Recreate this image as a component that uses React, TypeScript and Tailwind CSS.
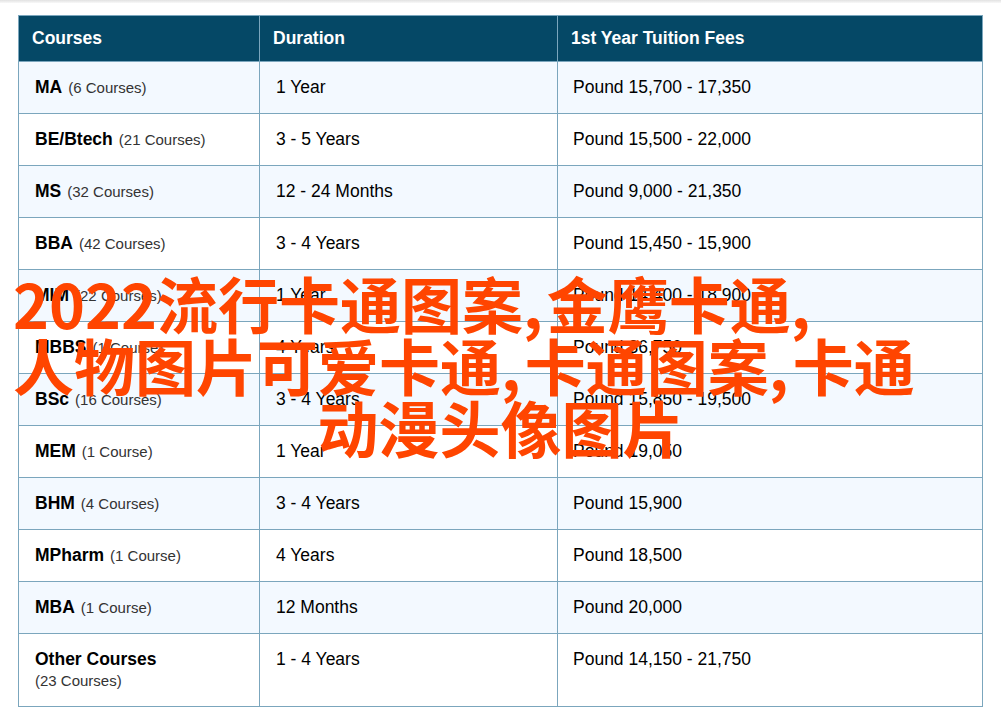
import React from 'react';

type Row = { name: string; count: string; duration: string; fees: string };

const rows: Row[] = [
  { name: 'MA', count: '(6 Courses)', duration: '1 Year', fees: 'Pound 15,700 - 17,350' },
  { name: 'BE/Btech', count: '(21 Courses)', duration: '3 - 5 Years', fees: 'Pound 15,500 - 22,000' },
  { name: 'MS', count: '(32 Courses)', duration: '12 - 24 Months', fees: 'Pound 9,000 - 21,350' },
  { name: 'BBA', count: '(42 Courses)', duration: '3 - 4 Years', fees: 'Pound 15,450 - 15,900' },
  { name: 'MIM', count: '(22 Courses)', duration: '1 Year', fees: 'Pound 14,400 - 18,900' },
  { name: 'MBBS', count: '(1 Course)', duration: '4 Years', fees: 'Pound 36,750' },
  { name: 'BSc', count: '(16 Courses)', duration: '3 - 4 Years', fees: 'Pound 15,850 - 19,500' },
  { name: 'MEM', count: '(1 Course)', duration: '1 Year', fees: 'Pound 19,050' },
  { name: 'BHM', count: '(4 Courses)', duration: '3 - 4 Years', fees: 'Pound 15,900' },
  { name: 'MPharm', count: '(1 Course)', duration: '4 Years', fees: 'Pound 18,500' },
  { name: 'MBA', count: '(1 Course)', duration: '12 Months', fees: 'Pound 20,000' },
];

const border = 'border border-[#7ba6bd]';

const App = () => {
  return (
    <div className="relative h-[720px] overflow-hidden bg-white font-['Liberation_Sans',Arial,sans-serif] text-black">
      <div className="h-[3px] bg-gradient-to-b from-[#e2e2e2] to-[#f8f8f8]" />
      <div className="pl-[18px] pt-[12px]">
        <table className="w-[965px] table-fixed border-collapse text-[17.5px]">
          <colgroup>
            <col className="w-[241px]" />
            <col className="w-[298px]" />
            <col />
          </colgroup>
          <thead>
            <tr className="h-[46px] bg-[#054866] text-left text-white">
              <th className={`${border} pl-[13px] font-bold`}>Courses</th>
              <th className={`${border} pl-[13px] font-bold`}>Duration</th>
              <th className={`${border} pl-[13px] font-bold`}>1st Year Tuition Fees</th>
            </tr>
          </thead>
          <tbody>
            {rows.map((row, i) => (
              <tr key={row.name} className={`h-[52px] ${i % 2 === 0 ? 'bg-[#f3f9ff]' : 'bg-white'}`}>
                <td className={`${border} pl-[16px] pt-[13px] align-top leading-[24px]`}>
                  <b>{row.name}</b>
                  <span className="ml-[6px] text-[15px] text-[#333]">{row.count}</span>
                </td>
                <td className={`${border} pl-[16px] pt-[13px] align-top leading-[24px]`}>{row.duration}</td>
                <td className={`${border} pl-[15px] pt-[13px] align-top leading-[24px]`}>{row.fees}</td>
              </tr>
            ))}
            <tr className="h-[73px] bg-white">
              <td className={`${border} pl-[16px] pt-[14px] align-top leading-[22px]`}>
                <b>Other Courses</b>
                <div className="text-[15px] text-[#333]">(23 Courses)</div>
              </td>
              <td className={`${border} pl-[16px] pt-[13px] align-top leading-[24px]`}>1 - 4 Years</td>
              <td className={`${border} pl-[15px] pt-[13px] align-top leading-[24px]`}>Pound 14,150 - 21,750</td>
            </tr>
          </tbody>
        </table>
      </div>

      {/* watermark title over the table */}
      <div className="absolute left-0 right-0 top-[272px] px-[13px] font-['Noto_Sans_CJK_SC',sans-serif] text-[61px] font-bold leading-[62px] text-[#ff4500]">
        <div>2022流行卡通图案<span className="tracking-[4px]">,</span>金鹰卡通,</div>
        <div>人物图片可爱卡通<span className="tracking-[4px]">,</span>卡通图案<span className="tracking-[4px]">,</span>卡通</div>
        <div className="text-center">动漫头像图片</div>
      </div>
    </div>
  );
};

export default App;
